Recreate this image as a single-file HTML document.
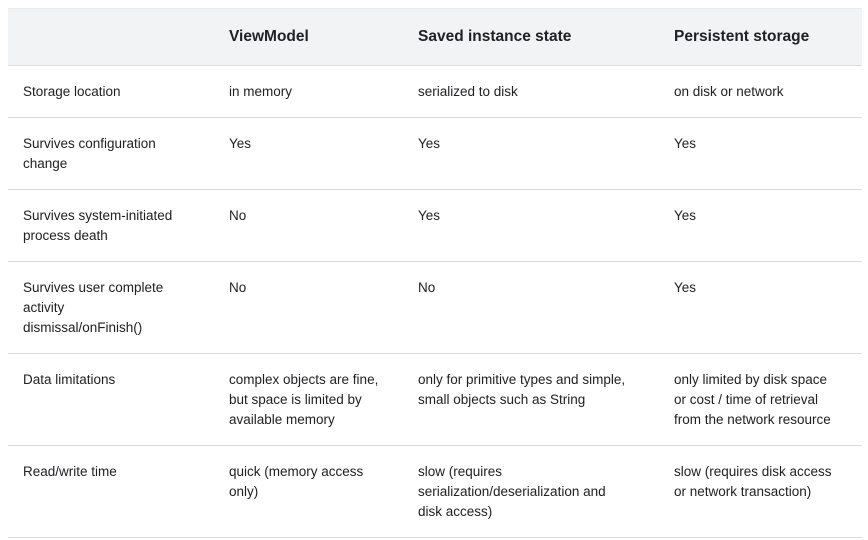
<!DOCTYPE html>
<html><head><style>
body{margin:0;background:#fff;font-family:"Liberation Sans",Roboto,sans-serif;color:#202124;}
table{position:absolute;left:8px;top:8px;width:854px;border-collapse:collapse;table-layout:fixed;font-size:13.5px;line-height:20px;}
th{background:#f1f3f4;font-size:15.5px;font-weight:bold;text-align:left;height:56px;padding:0 15px;border-top:1px solid #e8eaed;border-bottom:1px solid #dadce0;}
td{vertical-align:top;padding:16px 15px 15px;border-bottom:1px solid #dadce0;white-space:nowrap;overflow:hidden;}
</style></head><body>
<table>
<colgroup><col style="width:206px"><col style="width:189px"><col style="width:256px"><col style="width:203px"></colgroup>
<tr><th></th><th>ViewModel</th><th>Saved instance state</th><th>Persistent storage</th></tr>
<tr><td>Storage location</td><td>in memory</td><td>serialized to disk</td><td>on disk or network</td></tr>
<tr><td>Survives configuration<br>change</td><td>Yes</td><td>Yes</td><td>Yes</td></tr>
<tr><td>Survives system-initiated<br>process death</td><td>No</td><td>Yes</td><td>Yes</td></tr>
<tr><td>Survives user complete<br>activity<br>dismissal/onFinish()</td><td>No</td><td>No</td><td>Yes</td></tr>
<tr><td>Data limitations</td><td>complex objects are fine,<br>but space is limited by<br>available memory</td><td>only for primitive types and simple,<br>small objects such as String</td><td>only limited by disk space<br>or cost / time of retrieval<br>from the network resource</td></tr>
<tr><td>Read/write time</td><td>quick (memory access<br>only)</td><td>slow (requires<br>serialization/deserialization and<br>disk access)</td><td>slow (requires disk access<br>or network transaction)</td></tr>
</table>
</body></html>
